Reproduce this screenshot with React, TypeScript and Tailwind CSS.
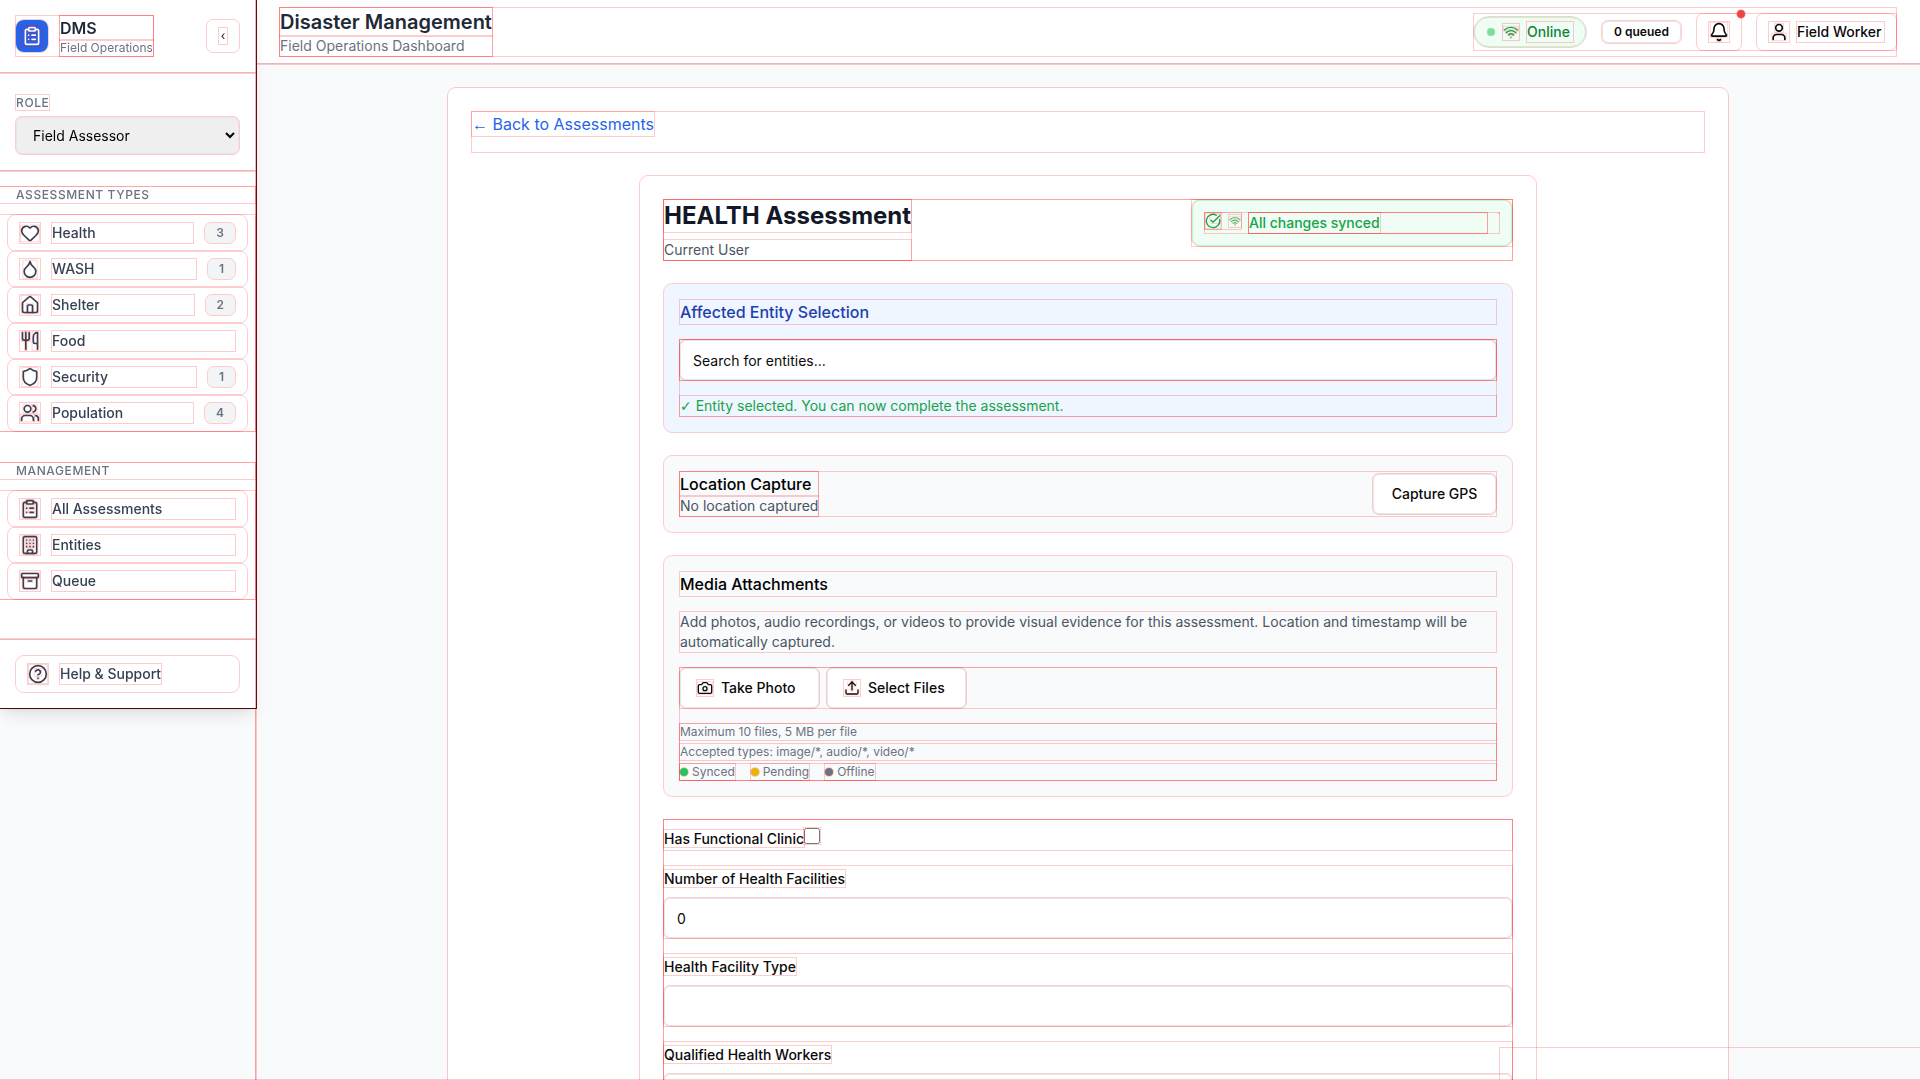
import type { ReactNode } from "react";
import {
  Archive,
  Bell,
  Building,
  Camera,
  CircleCheckBig,
  CircleQuestionMark,
  ClipboardList,
  Droplet,
  Heart,
  House,
  Shield,
  Upload,
  User,
  Users,
  Utensils,
  Wifi,
  type LucideIcon,
} from "lucide-react";

type NavItem = { label: string; icon: LucideIcon; count?: number };

const assessmentTypes: NavItem[] = [
  { label: "Health", icon: Heart, count: 3 },
  { label: "WASH", icon: Droplet, count: 1 },
  { label: "Shelter", icon: House, count: 2 },
  { label: "Food", icon: Utensils },
  { label: "Security", icon: Shield, count: 1 },
  { label: "Population", icon: Users, count: 4 },
];

const management: NavItem[] = [
  { label: "All Assessments", icon: ClipboardList },
  { label: "Entities", icon: Building },
  { label: "Queue", icon: Archive },
];

function NavSection({ title, items }: { title: string; items: NavItem[] }) {
  return (
    <div className="mb-8">
      <h3 className="mb-3 px-4 text-xs font-medium tracking-wider text-[#6b7280] uppercase">{title}</h3>
      <nav aria-label={title}>
        {items.map(({ label, icon: Icon, count }) => (
          <a
            key={label}
            href="#"
            className="mx-2 flex items-center gap-3 rounded-lg px-3 py-2 text-sm font-medium text-[#374151]"
          >
            <Icon className="size-5 shrink-0" />
            <span className="flex-1">{label}</span>
            {count !== undefined && (
              <span className="rounded-md bg-[#f3f4f6] px-[11px] py-0.5 text-xs font-semibold text-[#6b7280]">
                {count}
              </span>
            )}
          </a>
        ))}
      </nav>
    </div>
  );
}

function Sidebar() {
  return (
    <div className="z-10 h-full w-64 shrink-0">
      <aside className="border-r border-[#e5e7eb] bg-white shadow-lg outline-[#450a0a]!">
        <div className="flex items-center justify-between border-b border-[#e5e7eb] p-4">
          <div className="flex items-center gap-3">
            <div className="flex size-8 items-center justify-center rounded-lg bg-[#2563eb]">
              <ClipboardList className="size-5 text-white" />
            </div>
            <div>
              <h2 className="text-base font-semibold text-[#1f2937]">DMS</h2>
              <p className="text-xs text-[#6b7280]">Field Operations</p>
            </div>
          </div>
          <button
            type="button"
            aria-label="Collapse sidebar"
            className="flex size-8 items-center justify-center rounded-md text-xs text-[#111827]"
          >
            <span className="px-0.5">‹</span>
          </button>
        </div>

        <div className="border-b border-[#e5e7eb] p-4">
          <label htmlFor="role" className="text-xs font-medium tracking-wider text-[#6b7280] uppercase">
            Role
          </label>
          <select
            id="role"
            defaultValue="Field Assessor"
            className="mt-1 block h-[37px] w-full rounded-md border border-[#e5e7eb] bg-[#efefef] px-3 text-sm text-black"
          >
            <option>Field Assessor</option>
          </select>
        </div>

        <div className="pt-4 pb-2">
          <NavSection title="Assessment Types" items={assessmentTypes} />
          <NavSection title="Management" items={management} />
        </div>

        <div className="border-t border-[#e5e7eb] p-4">
          <button
            type="button"
            className="flex w-full items-center gap-3 rounded-lg px-3 py-2 text-sm font-medium text-[#374151]"
          >
            <CircleQuestionMark className="size-5" />
            <span>Help &amp; Support</span>
          </button>
        </div>
      </aside>
    </div>
  );
}

function Header() {
  return (
    <header className="flex h-16 shrink-0 items-center justify-between border-b border-[#e5e7eb] bg-white px-6">
      <div className="flex w-full items-center justify-between">
        <div>
          <h1 className="text-xl leading-7 font-semibold text-[#1f2937]">Disaster Management</h1>
          <p className="text-sm text-[#6b7280]">Field Operations Dashboard</p>
        </div>
        <div className="flex items-center gap-4">
          <div className="flex min-w-28 items-center gap-2 rounded-full border border-[#bbf7d0] bg-[#f0fdf4] px-3 py-1 text-[#15803d]">
            <div className="size-2 rounded-full bg-[#7dde9e] outline-none!" />
            <Wifi className="size-4 text-[#16a34a]" />
            <span className="flex-1 text-sm font-medium">Online</span>
          </div>
          <div className="min-w-[79px] rounded-md border border-[#e5e7eb] px-2.5 py-0.5 text-center text-xs font-semibold text-[#0a0a0a]">
            0 queued
          </div>
          <button type="button" aria-label="Notifications" className="relative rounded-md px-3 py-2 text-[#0a0a0a]">
            <Bell className="size-5" />
            <span className="absolute -top-1 -right-1 size-2 rounded-full bg-[#ef4444]" />
          </button>
          <button
            type="button"
            className="flex min-w-[139px] items-center gap-2 rounded-md px-3 py-2 text-sm font-medium text-[#0a0a0a]"
          >
            <User className="size-5" />
            <span className="flex-1 text-left">Field Worker</span>
          </button>
        </div>
      </div>
    </header>
  );
}

function OutlineButton({ icon: Icon, children }: { icon?: LucideIcon; children: ReactNode }) {
  return (
    <button
      type="button"
      className={
        Icon
          ? "flex h-10 min-w-[139px] items-center gap-2 rounded-md border border-[#e5e7eb] bg-white px-4 text-sm font-medium text-[#0a0a0a]"
          : "flex h-10 min-w-[123px] items-center justify-center rounded-md border border-[#e5e7eb] bg-white px-4 text-sm font-medium text-[#0a0a0a]"
      }
    >
      {Icon && <Icon className="size-4" />}
      {children}
    </button>
  );
}

function SyncStatus() {
  return (
    <div className="w-80 max-w-full">
      <div className="rounded-lg border border-[#bbf7d0] bg-[#f0fdf4] p-3">
        <div className="flex items-start gap-3">
          <div className="flex flex-1 items-start gap-2 outline-none!">
            <div className="flex items-center gap-2">
              <CircleCheckBig className="size-4 text-[#16a34a]" />
              <Wifi className="size-3 text-[#22c55e]" />
            </div>
            <div className="flex-1">
              <div className="flex items-center">
                <span className="text-sm font-medium text-[#16a34a]">All changes synced</span>
              </div>
            </div>
          </div>
          <div />
        </div>
      </div>
    </div>
  );
}

function Legend({ swatch, children }: { swatch: ReactNode; children: ReactNode }) {
  return (
    <span className="flex items-center gap-1">
      {swatch}
      {children}
    </span>
  );
}

function Field({ id, label, type, value }: { id: string; label: string; type: string; value?: string }) {
  return (
    <div>
      <label htmlFor={id} className="text-sm leading-none font-medium text-[#0a0a0a]">
        {label}
      </label>
      <input
        id={id}
        type={type}
        defaultValue={value}
        className="mt-2 block h-10 w-full rounded-md border border-[#e5e7eb] bg-white px-3 text-sm text-[#0a0a0a]"
      />
    </div>
  );
}

function AssessmentForm() {
  return (
    <div className="mx-auto max-w-4xl space-y-6 rounded-lg bg-white p-6">
      <div>
        <div className="flex items-start justify-between">
          <div>
            <h1 className="text-2xl leading-8 font-bold text-[#111827]">HEALTH Assessment</h1>
            <p className="mt-2 text-sm text-[#4b5563]">Current User</p>
          </div>
          <SyncStatus />
        </div>
      </div>

      <section className="rounded-lg bg-[#eff6ff] p-4">
        <h2 className="mb-4 font-medium text-[#1e40af]">Affected Entity Selection</h2>
        <div className="space-y-4">
          <div>
            <div>
              <input
                type="text"
                aria-label="Search for entities"
                placeholder="Search for entities..."
                className="block h-10 w-full rounded-md border border-[#e5e7eb] bg-white px-3 text-sm placeholder:text-[#0a0a0a]"
              />
            </div>
          </div>
          <p className="text-sm text-[#16a34a]">
            <span className="font-['DejaVu_Sans',sans-serif] leading-none outline-none!">✓</span> Entity selected. You
            can now complete the assessment.
          </p>
        </div>
      </section>

      <section className="rounded-lg bg-[#f9fafb] p-4">
        <div className="flex items-center justify-between">
          <div>
            <h2 className="font-medium">Location Capture</h2>
            <p className="text-sm text-[#4b5563]">No location captured</p>
          </div>
          <OutlineButton>Capture GPS</OutlineButton>
        </div>
      </section>

      <section className="space-y-4 rounded-lg bg-[#f9fafb] p-4">
        <h2 className="font-medium">Media Attachments</h2>
        <p className="text-sm text-[#4b5563]">
          Add photos, audio recordings, or videos to provide visual evidence for this assessment. Location and
          timestamp will be automatically captured.
        </p>
        <div className="space-y-4">
          <div className="flex gap-2">
            <OutlineButton icon={Camera}>Take Photo</OutlineButton>
            <OutlineButton icon={Upload}>Select Files</OutlineButton>
          </div>
          <div className="space-y-1 text-xs text-[#6b7280]">
            <p>Maximum 10 files, 5 MB per file</p>
            <p>Accepted types: image/*, audio/*, video/*</p>
            <div className="flex items-center gap-4">
              <Legend swatch={<div className="size-2 rounded-full bg-[#22c55e]" />}>Synced</Legend>
              <Legend swatch={<div className="size-2 rounded-full bg-[#eab308]" />}>Pending</Legend>
              <Legend swatch={<div className="size-2 rounded-full bg-[#6b7280]" />}>Offline</Legend>
            </div>
          </div>
        </div>
      </section>

      <form>
        <div className="space-y-4">
          <div>
            <label htmlFor="clinic" className="text-sm leading-none font-medium text-[#0a0a0a]">
              Has Functional Clinic
            </label>
            <input id="clinic" type="checkbox" className="mt-2 size-4" />
          </div>
          <Field id="facilities" label="Number of Health Facilities" type="text" value="0" />
          <Field id="facility-type" label="Health Facility Type" type="text" />
          <Field id="workers" label="Qualified Health Workers" type="text" value="0" />
        </div>
      </form>
    </div>
  );
}

export default function App() {
  return (
    <div className="flex h-screen overflow-hidden bg-[#f9fafb] font-['Inter',sans-serif] text-black [&_*]:outline [&_*]:outline-[#ff000033]">
      <Sidebar />
      <div className="flex min-w-0 flex-1 flex-col">
        <Header />
        <main className="min-h-0 flex-1 overflow-y-auto p-6 [scrollbar-width:none]">
          <div className="mx-auto max-w-7xl space-y-6 rounded-lg bg-white p-6">
            <div className="pb-4">
              <a href="#" className="inline-block text-[#2563eb]">
                <span className="font-['Liberation_Sans',sans-serif] leading-none outline-none!">←</span> Back to
                Assessments
              </a>
            </div>
            <AssessmentForm />
          </div>
        </main>
      </div>
      <div className="fixed inset-x-0 bottom-0" />
      <div role="status" className="pointer-events-none fixed right-0 bottom-0 w-full max-w-[420px] p-4" />
    </div>
  );
}
